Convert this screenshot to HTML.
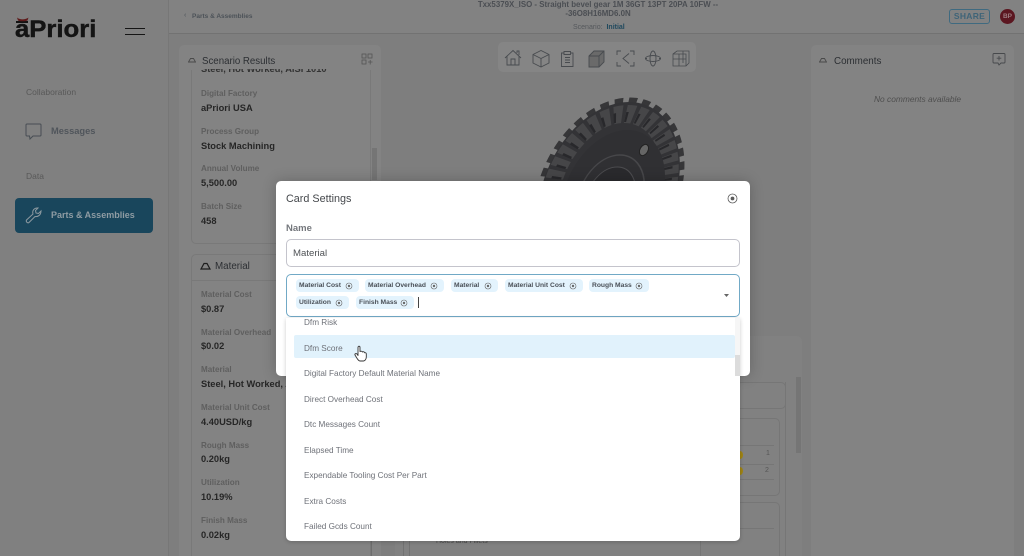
<!DOCTYPE html>
<html><head><meta charset="utf-8">
<style>
*{box-sizing:border-box}
html,body{margin:0;padding:0}
body{width:1024px;height:556px;overflow:hidden;position:relative;background:#7e7e7e;font-family:"Liberation Sans",sans-serif}
.a{position:absolute;white-space:nowrap}
.lab{position:absolute;left:201px;margin-top:1px;font-size:8.1px;color:#5f5f5f;white-space:nowrap;font-weight:bold}
.val{position:absolute;left:201px;font-size:9.3px;color:#262626;font-weight:bold;white-space:nowrap}
.chip{position:absolute;height:13px;background:#e3f3fd;border-radius:4px;font-size:6.7px;font-weight:bold;color:#4a5058;line-height:14px;padding-left:3px;white-space:nowrap}
.chip svg{position:absolute;right:6px;top:2.5px}
.opt{position:absolute;left:304px;margin-top:1px;font-size:8.2px;color:#6e7178;white-space:nowrap}
</style></head><body>

<!-- sidebar -->
<div class="a" style="left:0;top:0;width:169px;height:556px;background:#808080;border-right:1px solid #777"></div>
<div class="a" style="left:15px;top:15px;font-size:24px;font-weight:bold;color:#141414;-webkit-text-stroke:.45px #141414;line-height:30px;transform:scaleX(1.07);transform-origin:left">aPriori</div>
<div class="a" style="left:16px;top:21px;width:12px;height:2px;background:#141414"></div>
<svg class="a" style="left:16px;top:17px" width="14" height="5"><path d="M1 .5C4 3 9 3 12.500 .5L11.500 3.500C9 4.500 4 4.500 2 3.500Z" fill="#5e1a1a"/></svg>
<div class="a" style="left:125px;top:28px;width:20px;height:1.3px;background:#151515"></div>
<div class="a" style="left:125px;top:34px;width:20px;height:1.3px;background:#151515"></div>
<div class="a" style="left:26px;top:87px;font-size:8.5px;color:#585858">Collaboration</div>
<svg class="a" style="left:25px;top:123px" width="17" height="17" fill="none" stroke="#474d53" stroke-width="1"><path d="M2 1H15Q16 1 16 2V12Q16 13 15 13H8L5 16L4.500 13H2Q1 13 1 12V2Q1 1 2 1Z"/></svg>
<div class="a" style="left:51px;top:126px;font-size:9.300px;font-weight:bold;color:#50555b">Messages</div>
<div class="a" style="left:26px;top:171px;font-size:8.5px;color:#585858">Data</div>
<div class="a" style="left:15px;top:198px;width:138px;height:35px;background:#19465c;border-radius:4px"></div>
<svg class="a" style="left:25px;top:207px" width="17" height="17" fill="none" stroke="#8d9aa1" stroke-width="1"><path d="M1.500 13L8 7C7 4 9 .5 13 1L10.500 3.500L11 6L13.500 6.500L16 4C16 8 13 10 10 9.500L4 15.500C3 16.500 .5 15 1.500 13Z"/></svg>
<div class="a" style="left:51px;top:210px;font-size:9px;font-weight:bold;color:#8f9ca3">Parts &amp; Assemblies</div>

<!-- header -->
<div class="a" style="left:169px;top:0;width:855px;height:34px;background:#828282;border-bottom:1px solid #727272"></div>
<div class="a" style="left:184px;top:12px;font-size:7px;color:#4c5258">‹</div>
<div class="a" style="left:192px;top:12.500px;font-size:6.500px;color:#4c5258;font-weight:bold">Parts &amp; Assemblies</div>
<div class="a" style="left:448px;top:0;width:300px;text-align:center;font-size:7.900px;font-weight:bold;color:#4b4e53;line-height:9px;white-space:normal">Txx5379X_ISO - Straight bevel gear 1M 36GT 13PT 20PA 10FW --<br>-36O8H16MD6.0N</div>
<div class="a" style="left:573px;top:24px;font-size:7px;color:#55585c">Scenario:&nbsp; <b style="color:#20495e">Initial</b></div>
<div class="a" style="left:949px;top:9px;width:41px;height:15px;border:1px solid #3f6a80;border-radius:3px;text-align:center;font-size:8.500px;font-weight:bold;color:#3f6478;line-height:13px;letter-spacing:.3px">SHARE</div>
<div class="a" style="left:1000px;top:9px;width:15px;height:15px;border-radius:50%;background:#5b1620;text-align:center;font-size:6.500px;line-height:15px;color:#9b7b80;font-weight:bold">BP</div>

<!-- left panel -->
<div class="a" style="left:179px;top:45px;width:202px;height:511px;background:#838383;border-radius:5px 5px 0 0"></div>
<svg class="a" style="left:188px;top:57px" width="8" height="6"><path d="M.5 5L2.500 1.500H5.500L7.500 5Z" fill="none" stroke="#4a4a4a" stroke-width=".9"/></svg>
<div class="a" style="left:202px;top:56px;font-size:9.700px;color:#2c2f33">Scenario Results</div>
<svg class="a" style="left:361px;top:53px" width="12" height="12" fill="none" stroke="#555" stroke-width=".8"><rect x="1" y="1" width="4" height="4"/><rect x="7" y="1" width="4" height="4"/><rect x="1" y="7" width="4" height="4"/><path d="M7 9H11.500M9.200 7V11.500"/></svg>
<div class="a" style="left:191px;top:70px;width:180px;height:174px;border:1px solid #797979;border-top:0;border-radius:0 0 5px 5px;overflow:hidden"></div>
<div class="a" style="left:201px;top:69px;width:140px;height:6px;overflow:hidden"><span class="a" style="left:0;top:-5px;font-size:9.300px;font-weight:bold;color:#333">Steel, Hot Worked, AISI 1010</span></div>
<div class="a" style="left:372px;top:148px;width:5px;height:32px;background:#757575"></div>
<div class="lab" style="top:88px">Digital Factory</div><div class="val" style="top:103px">aPriori USA</div>
<div class="lab" style="top:126px">Process Group</div><div class="val" style="top:141px">Stock Machining</div>
<div class="lab" style="top:163px">Annual Volume</div><div class="val" style="top:178px">5,500.00</div>
<div class="lab" style="top:201px">Batch Size</div><div class="val" style="top:216px">458</div>

<div class="a" style="left:191px;top:254px;width:180px;height:302px;border:1px solid #797979;border-bottom:0;border-radius:5px 5px 0 0"></div>
<div class="a" style="left:192px;top:280px;width:178px;height:1px;background:#797979"></div>
<svg class="a" style="left:200px;top:261px" width="11" height="9"><path d="M1 8L4 2.500H7L10 8Z" fill="none" stroke="#1e1e1e" stroke-width="1.200"/></svg>
<div class="a" style="left:215px;top:261px;font-size:9.800px;color:#2c2f33">Material</div>
<div class="lab" style="top:289px">Material Cost</div><div class="val" style="top:304px">$0.87</div>
<div class="lab" style="top:327px">Material Overhead</div><div class="val" style="top:341px">$0.02</div>
<div class="lab" style="top:364px">Material</div><div class="val" style="top:379px">Steel, Hot Worked, AISI</div>
<div class="lab" style="top:402px">Material Unit Cost</div><div class="val" style="top:417px">4.40USD/kg</div>
<div class="lab" style="top:440px">Rough Mass</div><div class="val" style="top:454px">0.20kg</div>
<div class="lab" style="top:477px">Utilization</div><div class="val" style="top:492px">10.19%</div>
<div class="lab" style="top:515px">Finish Mass</div><div class="val" style="top:530px">0.02kg</div>

<!-- viewer toolbar -->
<div class="a" style="left:498px;top:42px;width:198px;height:30px;background:#858585;border-radius:5px"></div>
<svg class="a" style="left:498px;top:42px" width="198" height="30" fill="none" stroke="#484b4f" stroke-width=".9">
<path d="M7 16L15 8.500L23 16M9 14.500V23H21V14.500M13 23V17H17V23M19 11V9H21V13"/>
<path d="M35 12.500L43 8.500L51 12.500V21L43 25L35 21ZM35 12.500L43 16.500L51 12.500M43 16.500V25"/>
<path d="M66 11H63.500V24.500H75V11H72.500M66 9.500H72.500V12.500H66ZM67 15.500H72M67 18H72M67 20.500H72"/>
<path d="M91 14L96 9H106V20L101 25H91ZM91 14H101V25M101 14L106 9" fill="#6a6a6a"/>
<path d="M119 13V9H123M132 9H136V13M119 20V24H123M136 20V24H132M131 11.500L125 16.500L131 21.500"/>
<ellipse cx="155" cy="16.500" rx="7.500" ry="3"/><ellipse cx="155" cy="16.500" rx="3" ry="7.500"/><path d="M147 16.500H149M161 16.500H163"/>
<path d="M175 12L179 9H191V21L188 24H175ZM175 12H188V24M181 12V24M175 17H188M185 9V21" stroke-width=".8"/>
</svg>

<!-- gear -->
<svg class="a" style="left:520px;top:90px" width="180" height="95" fill="none">
<g transform="translate(89 100) matrix(1 0 -.226 1 0 0)">
<ellipse rx="70" ry="90" stroke="#363638" stroke-width="5" pathLength="36" stroke-dasharray=".6 .4"/>
<ellipse rx="68" ry="88" fill="#333336"/>
<ellipse rx="58" ry="76" stroke="#464648" stroke-width="18" pathLength="36" stroke-dasharray=".7 .3"/>
<ellipse rx="56" ry="73" stroke="#28282b" stroke-width="10" pathLength="36" stroke-dasharray=".2 .8"/>
<ellipse cx="5" cy="5" rx="50" ry="65" fill="#303033"/>
<ellipse cx="3" cy="5" rx="32" ry="40" stroke="#47474a" stroke-width="1.500"/>
<ellipse cx="3" cy="7" rx="24" ry="30" fill="#2a2a2d" stroke="#4c4c4f" stroke-width="1"/>
<ellipse cx="3" cy="12" rx="14" ry="18" fill="#3b3b40"/>
</g>
<ellipse cx="124" cy="60" rx="4" ry="6" transform="rotate(30 124 60)" fill="#666" stroke="#222" stroke-width="1"/>
</svg>

<!-- right panel -->
<div class="a" style="left:811px;top:45px;width:203px;height:511px;background:#838383;border-radius:5px 5px 0 0"></div>
<svg class="a" style="left:819px;top:57px" width="8" height="6"><path d="M.5 5L2.500 1.500H5.500L7.500 5Z" fill="none" stroke="#4a4a4a" stroke-width=".9"/></svg>
<div class="a" style="left:834px;top:56px;font-size:9.800px;color:#2c2f33">Comments</div>
<svg class="a" style="left:992px;top:52px" width="14" height="14" fill="none" stroke="#47494c" stroke-width=".9"><path d="M2 1.500H12Q13 1.500 13 2.500V10Q13 11 12 11H9L7 13L6 11H2Q1 11 1 10V2.500Q1 1.500 2 1.500ZM7 4V8.500M4.700 6.200H9.300"/></svg>
<div class="a" style="left:874px;top:94px;font-size:8.400px;font-style:italic;color:#4f4f4f">No comments available</div>

<!-- center bottom panel behind modal -->
<div class="a" style="left:395px;top:336px;width:407px;height:220px;background:#818181;border-radius:5px 5px 0 0"></div>
<div class="a" style="left:700px;top:382px;width:86px;height:27px;border:1px solid #767676;border-radius:5px"></div>
<div class="a" style="left:700px;top:418px;width:80px;height:78px;border:1px solid #767676;border-radius:5px"></div>
<div class="a" style="left:700px;top:445px;width:74px;height:1px;background:#767676"></div>
<div class="a" style="left:700px;top:464px;width:74px;height:1px;background:#767676"></div>
<div class="a" style="left:700px;top:479px;width:74px;height:1px;background:#767676"></div>
<div class="a" style="left:700px;top:502px;width:80px;height:54px;border:1px solid #767676;border-bottom:0;border-radius:5px 5px 0 0"></div>
<div class="a" style="left:700px;top:528px;width:74px;height:1px;background:#767676"></div>
<div class="a" style="left:737px;top:451px;width:6px;height:8px;border-radius:50%;background:#a08412"></div>
<div class="a" style="left:737px;top:467px;width:6px;height:8px;border-radius:50%;background:#a08412"></div>
<div class="a" style="left:766px;top:450px;font-size:7px;color:#555">1</div>
<div class="a" style="left:765px;top:467px;font-size:7px;color:#555">2</div>
<div class="a" style="left:796px;top:377px;width:5px;height:76px;background:#757575"></div>
<div class="a" style="left:785px;top:382px;width:1px;height:174px;background:#767676"></div>
<div class="a" style="left:436px;top:538px;font-size:7px;color:#4c4c4c">Holes and Fillets</div>
<div class="a" style="left:371px;top:538px;width:1px;height:18px;background:#6e6e6e"></div>
<div class="a" style="left:403px;top:538px;width:1px;height:18px;background:#727272"></div>
<div class="a" style="left:409px;top:538px;width:1px;height:18px;background:#727272"></div>

<!-- modal -->
<div class="a" style="left:276px;top:181px;width:474px;height:195px;background:#fff;border-radius:5px;box-shadow:0 0 14px rgba(0,0,0,.22)"></div>
<div class="a" style="left:286px;top:193px;font-size:10.800px;color:#45484c">Card Settings</div>
<svg class="a" style="left:727px;top:193px" width="11" height="11" fill="none" stroke="#5a5a5a" stroke-width=".8"><circle cx="5.500" cy="5.500" r="4.500"/><circle cx="5.500" cy="5.500" r="1.500" fill="#5a5a5a"/></svg>
<div class="a" style="left:286px;top:223px;font-size:9.500px;font-weight:bold;color:#74777c">Name</div>
<div class="a" style="left:286px;top:239px;width:454px;height:28px;border:1px solid #c4c4cc;border-radius:5px"></div>
<div class="a" style="left:293px;top:248px;font-size:9.600px;color:#4f5256">Material</div>
<div class="a" style="left:286px;top:274px;width:454px;height:43px;border:1px solid #71a9c6;border-radius:5px;background:#fff"></div>

<div class="chip" style="left:296px;top:279px;width:63px">Material Cost<svg width="8" height="8" fill="none" stroke="#666" stroke-width=".6"><circle cx="4" cy="4" r="3"/><circle cx="4" cy="4" r=".9" fill="#666"/></svg></div>
<div class="chip" style="left:365px;top:279px;width:79px">Material Overhead<svg width="8" height="8" fill="none" stroke="#666" stroke-width=".6"><circle cx="4" cy="4" r="3"/><circle cx="4" cy="4" r=".9" fill="#666"/></svg></div>
<div class="chip" style="left:451px;top:279px;width:47px">Material<svg width="8" height="8" fill="none" stroke="#666" stroke-width=".6"><circle cx="4" cy="4" r="3"/><circle cx="4" cy="4" r=".9" fill="#666"/></svg></div>
<div class="chip" style="left:505px;top:279px;width:78px">Material Unit Cost<svg width="8" height="8" fill="none" stroke="#666" stroke-width=".6"><circle cx="4" cy="4" r="3"/><circle cx="4" cy="4" r=".9" fill="#666"/></svg></div>
<div class="chip" style="left:589px;top:279px;width:60px">Rough Mass<svg width="8" height="8" fill="none" stroke="#666" stroke-width=".6"><circle cx="4" cy="4" r="3"/><circle cx="4" cy="4" r=".9" fill="#666"/></svg></div>
<div class="chip" style="left:296px;top:296px;width:53px">Utilization<svg width="8" height="8" fill="none" stroke="#666" stroke-width=".6"><circle cx="4" cy="4" r="3"/><circle cx="4" cy="4" r=".9" fill="#666"/></svg></div>
<div class="chip" style="left:356px;top:296px;width:58px">Finish Mass<svg width="8" height="8" fill="none" stroke="#666" stroke-width=".6"><circle cx="4" cy="4" r="3"/><circle cx="4" cy="4" r=".9" fill="#666"/></svg></div>
<div class="a" style="left:418px;top:297px;width:1px;height:11px;background:#444"></div>
<svg class="a" style="left:723px;top:293px" width="7" height="5"><path d="M1 1H6L3.500 4Z" fill="#666"/></svg>

<!-- dropdown -->
<div class="a" style="left:286px;top:318px;width:454px;height:223px;background:#fff;border-radius:0 0 5px 5px;box-shadow:0 1px 4px rgba(0,0,0,.2);overflow:hidden"></div>
<div class="a" style="left:294px;top:335px;width:441px;height:23px;background:#e1f2fc;border-radius:2px"></div>
<div class="a" style="left:735px;top:318px;width:5px;height:58px;background:#f6f6f6"></div>
<div class="a" style="left:735px;top:355px;width:5px;height:21px;background:#dcdcdc"></div>
<div class="opt" style="top:317px">Dfm Risk</div>
<div class="opt" style="top:343px">Dfm Score</div>
<div class="opt" style="top:368px">Digital Factory Default Material Name</div>
<div class="opt" style="top:394px">Direct Overhead Cost</div>
<div class="opt" style="top:419px">Dtc Messages Count</div>
<div class="opt" style="top:445px">Elapsed Time</div>
<div class="opt" style="top:470px">Expendable Tooling Cost Per Part</div>
<div class="opt" style="top:496px">Extra Costs</div>
<div class="opt" style="top:521px">Failed Gcds Count</div>

<!-- hand cursor -->
<svg class="a" style="left:354px;top:345px" width="13" height="17"><path d="M4 8V2.500C4 .8 6 .8 6 2.500V6.500C6.500 6 8 6 8.500 7C9 6.500 10.500 6.700 10.700 7.800C11.500 7.500 12.300 8 12.300 9V12C12.300 14 11 16 9.500 16H6C4.500 16 3.500 14 2.500 12.500L1 10C.5 8.800 2 8 3 9L4 10.500Z" fill="#fff" stroke="#333" stroke-width=".9" stroke-linejoin="round"/></svg>
</body></html>
